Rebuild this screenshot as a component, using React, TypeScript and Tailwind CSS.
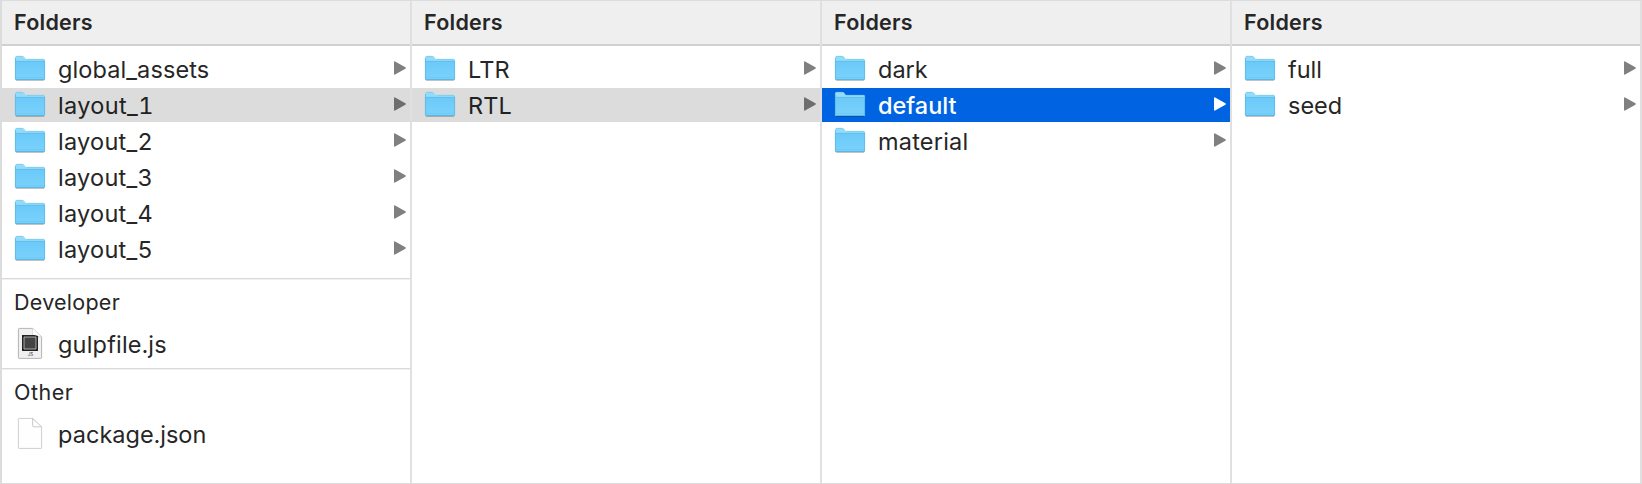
import type { ReactNode } from 'react';

type Entry = { name: string; kind: 'folder' | 'js' | 'file'; track: string; state?: 'path' | 'active' };

function FolderIcon() {
  return (
    <svg width="34" height="30" viewBox="0 0 34 30" className="block shrink-0">
      <defs>
        <linearGradient id="front" x1="0" y1="0" x2="0" y2="1">
          <stop offset="0" stopColor="#6bc9f8" />
          <stop offset="1" stopColor="#7ad2fc" />
        </linearGradient>
      </defs>
      <path d="M3 26.4H31" stroke="#000" strokeOpacity=".22" strokeWidth="1.2" />
      <path d="M2 3.6Q2 2 3.6 2H9.4Q10.6 2 11.3 3L12.4 4.4Q12.8 5 13.6 5H30.6Q32 5 32 6.4V24.8Q32 26 30.8 26H3.2Q2 26 2 24.8Z" fill="#92dbfb" />
      <path d="M2 7H32V24.8Q32 26 30.8 26H3.2Q2 26 2 24.8Z" fill="url(#front)" />
      <path d="M2.5 7.4H31.5" stroke="#5fbce9" strokeWidth=".8" />
      <path d="M2.5 23.6H31.5" stroke="#69c2ec" strokeWidth=".6" />
      <path d="M2.5 25.6H31.5" stroke="#55a9d0" strokeWidth=".8" />
      <path d="M2.4 4V25M31.6 6.5V25" stroke="#5ab7e2" strokeWidth=".8" />
      <path d="M3.2 2.3H9.6M13.6 5.3H31" stroke="#71c2e6" strokeWidth=".6" />
    </svg>
  );
}

function DocumentIcon({ script }: { script: boolean }) {
  return (
    <svg width="34" height="34" viewBox="0 0 34 34" className="block shrink-0">
      <path d="M6 2H19.5L29 12V31.5Q29 32 28.5 32H5.5Q5 32 5 31.5V3Q5 2 6 2Z" fill="#000" fillOpacity=".08" transform="translate(0 .8)" />
      <path d="M6.3 2.4H19.6L28.6 11.4V31.6Q28.6 32.4 27.8 32.4H6.3Q5.4 32.4 5.4 31.6V3.2Q5.4 2.4 6.3 2.4Z" fill={script ? '#f0f0f0' : '#fefefe'} stroke={script ? '#a5a5a5' : '#c4c4c4'} strokeWidth=".8" />
      <path d="M19.6 2.4V9.8Q19.6 10.8 20.6 10.8H28.6Z" fill="#fdfdfd" stroke="#bdbdbd" strokeWidth=".8" />
      {script && (
        <>
          <path d="M9 9H25V25H9Z" fill="#222" />
          <path d="M11 11H23V23H11Z" fill="#444" stroke="#c8c8c8" strokeWidth=".8" />
          <path d="M19.6 2.4V8.4L28 10.8Z" fill="#fdfdfd" />
          <text x="17.5" y="30" textAnchor="middle" fontSize="4.5" fontFamily="Inter, sans-serif" fill="#333">JS</text>
        </>
      )}
    </svg>
  );
}

function Row({ entry }: { entry: Entry }) {
  const { name, kind, track, state } = entry;
  const look =
    state === 'active' ? 'bg-[#0063e1] text-white font-medium' : state === 'path' ? 'bg-[#dcdcdc] text-[#222]' : 'text-[#262626]';
  const arrow = state === 'active' ? 'fill-white' : state === 'path' ? 'fill-[#6e6e6e]' : 'fill-[#808080]';
  const drop = kind === 'folder' ? 'mt-0.5' : 'mt-1';
  return (
    <li className={`flex h-[34px] items-center pr-1 pl-[11px] ${look}`}>
      {kind === 'folder' ? <FolderIcon /> : <DocumentIcon script={kind === 'js'} />}
      <span className={`ml-[11px] grow whitespace-nowrap text-[23.5px] leading-[34px] tabular-nums ${drop} ${track}`}>{name}</span>
      {kind === 'folder' && (
        <svg width="12" height="14" viewBox="0 0 12 14" className="mb-[2px] block shrink-0">
          <path className={arrow} d="M0 1.2Q0 0 1.1.5L11.4 6.3Q12.3 7 11.4 7.7L1.1 13.5Q0 14 0 12.8Z" />
        </svg>
      )}
    </li>
  );
}

function Column({ entries, children }: { entries: Entry[]; children?: ReactNode }) {
  return (
    <section className="flex min-w-0 flex-1 flex-col border-r-2 border-[#e0e0e0]">
      <h2 className="h-[45px] shrink-0 border-b-2 border-[#d0d0d0] bg-[#efefef] pl-3 text-[21.5px] leading-[43px] font-semibold tracking-[0.25px] text-[#262626]">
        Folders
      </h2>
      <ul className="flex flex-col gap-0.5 pt-1.5">
        {entries.map((e) => (
          <Row key={e.name} entry={e} />
        ))}
      </ul>
      {children}
    </section>
  );
}

function Group({ title, entry, className, track }: { title: string; entry: Entry; className: string; track: string }) {
  return (
    <div className={`border-t border-[#dadada] shadow-[inset_0_1px_0_#f0f0f0] ${className}`}>
      <h3 className={`pt-[7px] pl-3 text-[21.5px] leading-[32px] text-[#262626] ${track}`}>{title}</h3>
      <ul className="pt-2">
        <Row entry={entry} />
      </ul>
    </div>
  );
}

const root: Entry[] = [
  { name: 'global_assets', kind: 'folder', track: 'tracking-[0.1px]' },
  { name: 'layout_1', kind: 'folder', track: 'tracking-[0.35px]', state: 'path' },
  { name: 'layout_2', kind: 'folder', track: 'tracking-[0.25px]' },
  { name: 'layout_3', kind: 'folder', track: 'tracking-[0.25px]' },
  { name: 'layout_4', kind: 'folder', track: 'tracking-[0.25px]' },
  { name: 'layout_5', kind: 'folder', track: 'tracking-[0.25px]' },
];
const directions: Entry[] = [
  { name: 'LTR', kind: 'folder', track: 'tracking-[0.1px]' },
  { name: 'RTL', kind: 'folder', track: 'tracking-[0.1px]', state: 'path' },
];
const themes: Entry[] = [
  { name: 'dark', kind: 'folder', track: 'tracking-[0px]' },
  { name: 'default', kind: 'folder', track: 'tracking-[0px]', state: 'active' },
  { name: 'material', kind: 'folder', track: 'tracking-[0.2px]' },
];
const variants: Entry[] = [
  { name: 'full', kind: 'folder', track: 'tracking-[0px]' },
  { name: 'seed', kind: 'folder', track: 'tracking-[0px]' },
];

export default function App() {
  return (
    <main className="flex h-[484px] w-[1642px] overflow-hidden border-t border-b border-l-2 border-[#dcdcdc] bg-white font-['Inter',sans-serif]">
      <Column entries={root}>
        <Group title="Developer" track="tracking-[0.25px]" className="mt-[12px] h-[90px] shrink-0" entry={{ name: 'gulpfile.js', kind: 'js', track: 'tracking-[0.2px]' }} />
        <Group title="Other" track="tracking-[0.5px]" className="h-[90px] shrink-0" entry={{ name: 'package.json', kind: 'file', track: 'tracking-[0.05px]' }} />
      </Column>
      <Column entries={directions} />
      <Column entries={themes} />
      <Column entries={variants} />
    </main>
  );
}
